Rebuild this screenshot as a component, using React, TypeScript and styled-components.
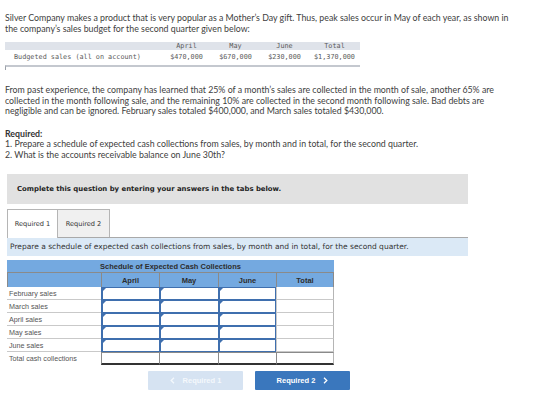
import React from "react";
import styled, { createGlobalStyle } from "styled-components";

const Global = createGlobalStyle`
  html, body { margin: 0; padding: 0; background: #fff; }
  body { font-family: Lato, "Open Sans", sans-serif; color: #333; }
`;

const Page = styled.div`
  width: 560px;
  height: 420px;
  overflow: hidden;
  padding: 13px 0 0 5px;
  box-sizing: border-box;
`;

const Para = styled.p<{ $top?: number }>`
  margin: ${(p) => p.$top ?? 0}px 0 0;
  font-size: 8.8px;
  line-height: 10.5px;
  color: #404040;
  white-space: nowrap;
`;

const Strong = styled.span`
  font-weight: 700;
  color: #333;
`;

/* sales budget (monospace report table) */
const Budget = styled.div`
  margin-top: 8px;
  width: 355px;
  font-family: "DejaVu Sans Mono", "Liberation Mono", monospace;
  font-size: 6.8px;
  color: #5a5a5a;
`;

const BudgetRow = styled.div<{ $head?: boolean }>`
  display: grid;
  grid-template-columns: 157px 49px 49px 49px 51px;
  height: ${(p) => (p.$head ? 8 : 13)}px;
  align-items: center;
  background: ${(p) => (p.$head ? "#dfe3ea" : "#fff")};
`;

const BCell = styled.span<{ $label?: boolean }>`
  text-align: ${(p) => (p.$label ? "left" : "center")};
  padding-left: ${(p) => (p.$label ? 9 : 0)}px;
  white-space: pre;
`;

const BudgetFoot = styled.div`
  margin-top: 2px;
  height: 3px;
  border-top: 2px solid #c4c8cf;
  border-left: 1px solid #9aa0a8;
`;

/* instructions panel */
const Notice = styled.div`
  margin: 14px 0 0 2px;
  width: 461px;
  height: 30px;
  background: #e1e1e1;
  display: flex;
  align-items: center;
  padding-left: 10px;
  box-sizing: border-box;
  font-family: "DejaVu Sans", Verdana, sans-serif;
  font-weight: 700;
  font-size: 6.9px;
  color: #222;
`;

const Tabs = styled.div`
  margin: 5px 0 0 2px;
  width: 461px;
  height: 28px;
  display: flex;
  align-items: flex-end;
  border-bottom: 1px solid #a9a9a9;
`;

const Tab = styled.div<{ $active?: boolean }>`
  width: ${(p) => (p.$active ? 51 : 52)}px;
  height: ${(p) => (p.$active ? 29 : 28)}px;
  margin-bottom: ${(p) => (p.$active ? -1 : 0)}px;
  box-sizing: border-box;
  display: flex;
  align-items: center;
  justify-content: center;
  padding-bottom: ${(p) => (p.$active ? 1 : 0)}px;
  font-family: "DejaVu Sans", Verdana, sans-serif;
  font-size: 6.6px;
  color: #333;
  border: 1px solid #b5b5b5;
  border-bottom: none;
  background: ${(p) => (p.$active ? "#fff" : "#f0f0f0")};
  & + & { border-left: none; }
`;

const Prompt = styled.div`
  margin-left: 2px;
  width: 461px;
  height: 18px;
  background: #dbe9f6;
  display: flex;
  align-items: center;
  padding: 0 0 1px 3px;
  box-sizing: border-box;
  font-family: "DejaVu Sans", Verdana, sans-serif;
  font-size: 7.5px;
  color: #333;
  white-space: nowrap;
`;

/* schedule grid */
const Schedule = styled.div`
  margin: 4px 0 0 2px;
  width: 327px;
  display: grid;
  grid-template-columns: 94px 58px 59px 58px 58px;
  font-family: "Liberation Sans", Arial, sans-serif;
`;

const Title = styled.div`
  grid-column: 1 / -1;
  height: 13px;
  background: #74a9e0;
  border-bottom: 1px solid #8a8a8a;
  box-sizing: border-box;
  display: flex;
  align-items: center;
  justify-content: center;
  font-weight: 700;
  font-size: 7.5px;
  color: #2d2d2d;
`;

const Head = styled.div<{ $last?: boolean }>`
  height: 14px;
  background: #74a9e0;
  box-sizing: border-box;
  border-left: 1px solid #8a8a8a;
  border-right: ${(p) => (p.$last ? "1px solid #8a8a8a" : "none")};
  display: flex;
  align-items: center;
  justify-content: center;
  font-weight: 700;
  font-size: 7.5px;
  color: #2d2d2d;
  &:first-of-type { border-left: none; }
`;

const Label = styled.div`
  height: 13px;
  box-sizing: border-box;
  border-bottom: 1px solid #c9c9c9;
  display: flex;
  align-items: center;
  padding-left: 2px;
  font-size: 7.2px;
  color: #555;
`;

const TotalLabel = styled(Label)`
  border-bottom: none;
`;

const Entry = styled.div<{ $edge?: boolean }>`
  position: relative;
  height: 13px;
  box-sizing: border-box;
  background: #fff;
  border: 1px solid #3f6fae;
  border-left-width: 2px;
  border-bottom-width: 1.5px;
  border-right: ${(p) => (p.$edge ? "1px solid #3f6fae" : "none")};
  &::before {
    content: "";
    position: absolute;
    left: 0;
    top: 0;
    border-top: 3px solid #3f6fae;
    border-right: 3px solid transparent;
  }
`;

const Plain = styled.div<{ $total?: boolean; $last?: boolean }>`
  height: 13px;
  box-sizing: border-box;
  background: #fff;
  border-left: 1px solid ${(p) => (p.$total ? "#8a8a8a" : "#c9c9c9")};
  border-right: ${(p) => (p.$last ? "1px solid #b5b5b5" : "none")};
  border-bottom: ${(p) => (p.$total ? "2px solid #333" : "1px solid #c9c9c9")};
  border-top: ${(p) => (p.$total ? "1px solid #8a8a8a" : "none")};
`;

const Nav = styled.div`
  margin: 6px 0 0 143px;
  display: flex;
  gap: 12px;
`;

const NavButton = styled.div<{ $disabled?: boolean }>`
  width: 95px;
  height: 19px;
  display: flex;
  align-items: center;
  justify-content: center;
  gap: 8px;
  border-radius: 1px;
  background: ${(p) => (p.$disabled ? "#d6e3f2" : "#3a77bd")};
  color: ${(p) => (p.$disabled ? "#f4f8fc" : "#fff")};
  font-family: "Liberation Sans", Arial, sans-serif;
  font-weight: 700;
  font-size: 7.5px;
`;

const Chevron = ({ dir }: { dir: "left" | "right" }) => (
  <svg width="5" height="7" viewBox="0 0 5 7">
    <path
      d={dir === "left" ? "M4 0.8 L1.2 3.5 L4 6.2" : "M1 0.8 L3.8 3.5 L1 6.2"}
      fill="none"
      stroke="currentColor"
      strokeWidth="1.3"
    />
  </svg>
);

const rows = ["February sales", "March sales", "April sales", "May sales", "June sales"];

export default function App() {
  return (
    <Page>
      <Global />
      <Para>
        Silver Company makes a product that is very popular as a Mother’s Day gift. Thus, peak sales occur in May of each year, as shown in
        <br />
        the company’s sales budget for the second quarter given below:
      </Para>

      <Budget>
        <BudgetRow $head>
          <BCell $label />
          <BCell>April</BCell>
          <BCell>May</BCell>
          <BCell>June</BCell>
          <BCell>Total</BCell>
        </BudgetRow>
        <BudgetRow>
          <BCell $label>Budgeted sales (all on account)</BCell>
          <BCell>$470,000</BCell>
          <BCell>$670,000</BCell>
          <BCell>$230,000</BCell>
          <BCell>$1,370,000</BCell>
        </BudgetRow>
        <BudgetFoot />
      </Budget>

      <Para $top={15}>
        From past experience, the company has learned that 25% of a month’s sales are collected in the month of sale, another 65% are
        <br />
        collected in the month following sale, and the remaining 10% are collected in the second month following sale. Bad debts are
        <br />
        negligible and can be ignored. February sales totaled $400,000, and March sales totaled $430,000.
      </Para>

      <Para $top={12}>
        <Strong>Required:</Strong>
        <br />
        1. Prepare a schedule of expected cash collections from sales, by month and in total, for the second quarter.
        <br />
        2. What is the accounts receivable balance on June 30th?
      </Para>

      <Notice>Complete this question by entering your answers in the tabs below.</Notice>

      <Tabs>
        <Tab $active>Required 1</Tab>
        <Tab>Required 2</Tab>
      </Tabs>

      <Prompt>Prepare a schedule of expected cash collections from sales, by month and in total, for the second quarter.</Prompt>

      <Schedule>
        <Title>Schedule of Expected Cash Collections</Title>
        <Head />
        <Head>April</Head>
        <Head>May</Head>
        <Head>June</Head>
        <Head $last>Total</Head>
        {rows.map((r) => (
          <React.Fragment key={r}>
            <Label>{r}</Label>
            <Entry />
            <Entry />
            <Entry $edge />
            <Plain $last />
          </React.Fragment>
        ))}
        <TotalLabel>Total cash collections</TotalLabel>
        <Plain $total />
        <Plain $total />
        <Plain $total />
        <Plain $total $last />
      </Schedule>

      <Nav>
        <NavButton $disabled>
          <Chevron dir="left" />
          Required 1
        </NavButton>
        <NavButton>
          Required 2
          <Chevron dir="right" />
        </NavButton>
      </Nav>
    </Page>
  );
}
